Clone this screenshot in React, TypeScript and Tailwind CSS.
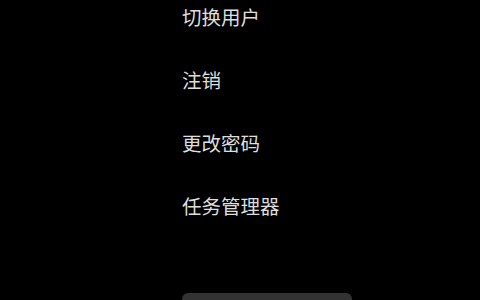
import React from 'react';

const items = ['切换用户', '注销', '更改密码', '任务管理器'];

export default function App() {
  return (
    <div
      className="h-[300px] w-[480px] overflow-hidden bg-black"
      style={{ fontFamily: '"Noto Sans CJK SC", "Noto Sans", sans-serif' }}
    >
      <div className="flex flex-col pl-[182px] pt-[3px]">
        {items.map((label) => (
          <button
            key={label}
            className="h-[63px] w-fit text-left text-[19.5px] leading-[28px] text-[#dedede] flex items-start"
          >
            {label}
          </button>
        ))}
        <div className="mt-[38px] h-[40px] w-[170px] rounded-md bg-[#333333]" />
      </div>
    </div>
  );
}
